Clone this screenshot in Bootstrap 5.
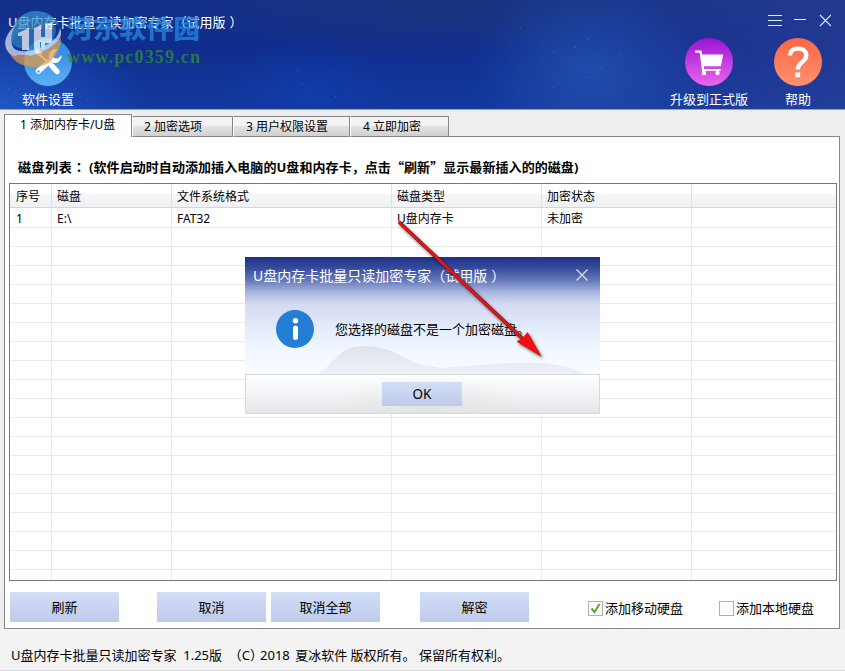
<!DOCTYPE html>
<html lang="zh-CN">
<head>
<meta charset="utf-8">
<meta name="viewport" content="width=device-width, initial-scale=1">
<title>U盘内存卡批量只读加密专家</title>
<link rel="stylesheet" href="https://cdn.jsdelivr.net/npm/bootstrap@5.3.0/dist/css/bootstrap.min.css">
<style>
body{font-family:"Noto Sans","Noto Sans CJK SC",sans-serif;font-size:13px;line-height:20px;color:#000;background:#f3f3f3;overflow:hidden}
.app{width:845px;height:671px;border-bottom:1px solid #d9d9dc}
.hero{height:110px;color:#fff;border-bottom:1px solid #8d9fd8;
 background:
 radial-gradient(ellipse 150px 90px at 0 100%,rgba(35,95,205,.8),transparent),
 radial-gradient(ellipse 90px 50px at 310px 90px,rgba(18,62,176,.6),transparent),
 radial-gradient(ellipse 120px 90px at 590px 70px,rgba(36,84,180,.75),transparent),
 radial-gradient(ellipse 260px 60px at 440px 0,rgba(28,54,122,.8),transparent),
 linear-gradient(90deg,rgba(50,68,150,0) 60%,rgba(50,68,150,.5) 100%),
 linear-gradient(#13308a,#102d8e 45%,#12399f)}
.hero-stars{left:0;top:0;pointer-events:none}
.titlebar{height:38px;padding:6px 14px 0 8px;line-height:32px}
.tool{width:96px;line-height:20px}
.tool svg{margin-bottom:3px}
.help-tool{margin-left:-7px;margin-right:-1px}
.paren{margin-left:4px}
.brand{left:4px;top:10px;pointer-events:none}
.work{height:519px;padding:4px 5px 0 4px;background:#eee}
.tabs{height:23px;position:relative;z-index:1;margin-bottom:-1px}
.tab-item{border:1px solid #868686;border-left-color:#fff;box-shadow:-1px 0 #868686;height:21px;font-size:12px;line-height:20px;padding-left:11px;background:linear-gradient(#f3f3f3 45%,#e2e2e2 50%,#d0d0d0)}
.tab-on{height:23px;background:#fff;border-color:#868686;border-bottom:0;padding-left:15px;width:128px;box-shadow:none}
.t2{width:101px}.t3,.t4{padding-left:12px}.t3{width:117px}.t4{width:99px}
.panel{height:493px;border:1px solid #868686;background:#fff}
.hint{height:46px;padding:20px 0 0 13px;font-size:13px;font-weight:700;letter-spacing:.07px}
.hint-lead{font-family:"Noto Sans CJK TC",sans-serif;letter-spacing:.6px;margin-right:3px}
.quote{font-family:"Noto Sans CJK SC",sans-serif}
.grid-box{height:398px;margin:0 2px 0 4px;border:1px solid #75777b;overflow:hidden}
.grid-table{width:826px;table-layout:fixed;font-size:12px;margin:0;border-collapse:separate;border-spacing:0}
.grid-table th{height:24px;padding:2px 5px 0;font-weight:400;line-height:20px;background:linear-gradient(#fff 42%,#f5f6f8 46%,#f0f1f3);border-right:1px solid #dfe1e4;border-bottom:1px solid #d3d5d8}
.grid-table td{height:19px;padding:0 5px;line-height:18px;border-right:1px solid #ebebeb;border-bottom:1px solid #ebebeb}
.grid-table tbody tr:first-child td{height:20px;padding-top:2px;line-height:17px}
.grid-table tr>:first-child{padding-left:6px}
.grid-table tr>:last-child{border-right:0}
.actions{padding:11px 25px 0 5px}
.act,.act:hover{height:30px;width:109px;padding:0;border:0;border-radius:0;font-size:13px;line-height:30px;color:#000;background:linear-gradient(#d3def6,#bdcaea)}
.gap-a{margin-left:38px}.gap-b{margin-left:5px}.gap-c{margin-left:40px}
.opt{margin-top:6px;line-height:20px;white-space:nowrap;gap:2px}
.opt-b{margin-left:36px}
.box{width:15px;height:15px;border:1px solid #aeb0b4;background:#fcfcfc}
.foot{height:41px;padding:16px 11px 0;font-size:13px;line-height:20px;white-space:pre}
.year{margin:0 2px 0 -3px}
.dlg{left:245px;top:257px;width:355px;height:157px;background:#fff}
.dlg-body{height:117px;background:linear-gradient(#1d3186 0,#344a9c 9%,#6578ba 20%,#a9b5dd 30%,#d2d9f1 40%,#e2e9fa 58%,#f1f8ff 80%,#f8fcff)}
.dlg-title{height:36px;padding:3px 12px 0 8px;font-size:14px;line-height:32px;color:#fff}
.dlg-x{margin-top:9px}
.dlg-msg{padding:17px 0 0 31px;gap:21px}
.hills{left:0;top:0}
.dlg-foot{height:40px;border:1px solid #d7dadd;background:radial-gradient(ellipse 100px 24px at 52% 75%,rgba(222,222,222,.6),transparent),linear-gradient(#fdfdfe,#f0f2f5 60%,#e3e6e8);padding-top:7px;padding-right:1px}
.dlg-ok,.dlg-ok:hover{width:80px;height:24px;font-size:13.500px;line-height:25px}
.arrow{left:0;top:0;pointer-events:none}
</style>
<script src="https://cdn.jsdelivr.net/npm/bootstrap@5.3.0/dist/js/bootstrap.bundle.min.js"></script>
</head>
<body>
<div class="app position-relative">
  <header class="hero position-relative">
    <svg class="hero-stars position-absolute" width="845" height="109" fill="#7ba6ff" fill-opacity=".35"><path d="M8 88h1v1h-1zM18 102h1v1h-1zM68 78h1v1h-1zM59 92h1v1h-1zM20 97h1v1h-1zM6 100h1v1h-1zM75 88h1v1h-1zM87 100h1v1h-1zM297 70h1v1h-1zM302 83h1v1h-1zM309 86h1v1h-1zM338 85h1v1h-1zM335 96h1v1h-1zM330 70h1v1h-1zM520 27h1v1h-1zM541 44h1v1h-1zM553 52h1v1h-1zM553 87h1v1h-1zM570 60h1v1h-1zM575 47h1v1h-1zM588 39h1v1h-1zM601 68h1v1h-1zM610 90h1v1h-1zM620 53h1v1h-1zM585 77h1v1h-1z"/></svg>
    <div class="titlebar d-flex justify-content-between position-relative">
      <span class="app-title">U盘内存卡批量只读加密专家（试用版<span class="paren">）</span></span>
      <svg width="64" height="14" viewBox="0 0 64 14" class="mt-2" fill="none" stroke="#e8ecf8" stroke-width="1"><path d="M1 1.500h14M1 6.500h14M1 11.500h14M27 5.500h12"/><path d="M53 1l11 11M64 1L53 12" stroke-width="1.100"/></svg>
    </div>
    <div class="d-flex position-relative">
      <div class="tool d-flex flex-column align-items-center">
        <svg width="48" height="48" viewBox="0 0 48 48"><defs><linearGradient id="gb" x2="0" y2="1"><stop stop-color="#2b83dc"/><stop offset="1" stop-color="#5bb0f5"/></linearGradient></defs><circle cx="24" cy="24" r="24" fill="url(#gb)"/><path d="M15 16L30 30" stroke="#fff" stroke-width="2.200"/><path d="M27.500 27.500l5.500 6" stroke="#fff" stroke-width="5.500" stroke-linecap="round"/><path d="M14.500 33L24 24.500" stroke="#fff" stroke-width="5.500" stroke-linecap="round"/><path d="M23 26l5-5" stroke="#fff" stroke-width="3.500"/><path d="M34 11.500l-4.500 4v4.500l4.500.500 3.500-3.500a7 7 0 0 1-9.500 7.500 7 7 0 0 1-2-9.500 7 7 0 0 1 8-3.500zM10 13.500l3-2.500 5.500 4-3.500 3.500z" fill="#fff"/><circle cx="14.500" cy="33.500" r="1.200" fill="#4ba1ec"/></svg>
        <span>软件设置</span>
      </div>
      <div class="tool d-flex flex-column align-items-center ms-auto">
        <svg width="48" height="48" viewBox="0 0 48 48"><defs><linearGradient id="gp" x2="0" y2="1"><stop stop-color="#9914d4"/><stop offset="1" stop-color="#ec66ed"/></linearGradient></defs><circle cx="24" cy="24" r="24" fill="url(#gp)"/><path d="M10 13.700h5.600l2.500 18.300h17.500" fill="none" stroke="#fff" stroke-width="2.200"/><path d="M16 16.500h22.300l-2.500 11.800H17.600z" fill="#fff"/><path d="M18 31v4M33 32v3" stroke="#fff" stroke-width="2"/><circle cx="19" cy="35" r="2.200" fill="#fff"/><circle cx="32.500" cy="35" r="2.200" fill="#fff"/></svg>
        <span>升级到正式版</span>
      </div>
      <div class="tool d-flex flex-column align-items-center help-tool">
        <svg width="48" height="48" viewBox="0 0 48 48"><defs><linearGradient id="go" x2="0" y2="1"><stop stop-color="#fb6644"/><stop offset="1" stop-color="#ff926f"/></linearGradient></defs><circle cx="24" cy="24" r="24" fill="url(#go)"/><path d="M16 17.500c.2-4.300 3-6.800 8-6.800 5 0 8.300 2.600 8.300 6.800 0 6.500-8.600 6.800-8.600 14" fill="none" stroke="#fff" stroke-width="4.300"/><path d="M21.200 34.500h5v4.700h-5z" fill="#fff"/></svg>
        <span>帮助</span>
      </div>
    </div>
    <svg class="brand position-absolute" width="202" height="60" viewBox="4 10 202 60">
      <g opacity=".72">
        <path d="M11 31C15 18 25 11 36 11c10 0 19 5 23 14-10-4-20-4-29 1-9 4-16 12-19 21-2-5-2-10 0-16z" fill="#3794cb"/>
        <path d="M13 45c0-10 8-18 18-22 9-3 18-2 24 3 2 6 0 12-5 16-10 8-25 10-37 3z" fill="#2d80bd"/>
        <path d="M8 50c12 8 36 6 53-12 0 5-1 9-3 13l-8 11c-8 5-16 6-24 4-9-2-15-8-18-16z" fill="#e39a42"/>
        <path d="M15 26C5 34 2 46 9 53c9 8 34 3 49-12 3-3 4-9 2-13-1 7-5 12-12 16-13 8-31 10-35 3-3-6-2-14 2-21z" fill="#dde4f1"/>
        <path d="M18 33l11-5v22h-7V36h-4zM34 28l7-3v12h4V24l7-2v21h-7v6h-4v-7h-1v8h-6z" fill="#fff"/>
        <path d="M16 55h13v9h-6zM46 51l11-3-2 8-8 5z" fill="#e7a04b"/>
      </g>
      <text x="66" y="38" textLength="134" lengthAdjust="spacingAndGlyphs" font-family="Noto Sans CJK SC,sans-serif" font-weight="900" font-size="25" fill="#2489df" fill-opacity=".75">河东软件园</text>
      <text x="67" y="63" textLength="133" lengthAdjust="spacing" font-family="Liberation Serif,serif" font-weight="700" font-size="18" fill="#2c8a3c" fill-opacity=".8">www.pc0359.cn</text>
    </svg>
  </header>

  <main class="work">
    <div class="tabs d-flex align-items-end">
      <div class="tab-item tab-on">1 添加内存卡/U盘</div>
      <div class="tab-item t2">2 加密选项</div>
      <div class="tab-item t3">3 用户权限设置</div>
      <div class="tab-item t4">4 立即加密</div>
    </div>
    <section class="panel">
      <div class="hint text-nowrap"><span class="hint-lead" lang="zh-TW">磁盘列表：</span>(软件启动时自动添加插入电脑的U盘和内存卡，点击<span class="quote">“</span>刷新<span class="quote">”</span>显示最新插入的的磁盘)</div>
      <div class="grid-box">
        <table class="grid-table">
          <colgroup><col style="width:42px"><col style="width:120px"><col style="width:220px"><col style="width:150px"><col style="width:150px"><col></colgroup>
          <thead><tr><th>序号</th><th>磁盘</th><th>文件系统格式</th><th>磁盘类型</th><th>加密状态</th><th></th></tr></thead>
          <tbody id="rows"><tr><td>1</td><td>E:\</td><td>FAT32</td><td>U盘内存卡</td><td>未加密</td><td></td></tr></tbody>
        </table>
      </div>
      <div class="actions d-flex align-items-start">
        <button class="btn act">刷新</button>
        <button class="btn act gap-a">取消</button>
        <button class="btn act gap-b">取消全部</button>
        <button class="btn act gap-c">解密</button>
        <label class="d-flex align-items-center ms-auto opt"><span class="box"><svg width="13" height="13" class="d-block"><path d="M2.500 6.500l3 3.500 5-8" fill="none" stroke="#5fa52b" stroke-width="2"/></svg></span>添加移动硬盘</label>
        <label class="d-flex align-items-center opt opt-b"><span class="box"></span>添加本地硬盘</label>
      </div>
    </section>
  </main>
  <footer class="foot">U盘内存卡批量只读加密专家  1.25版  （C）<span class="year">2018</span> 夏冰软件 版权所有。 保留所有权利。</footer>

  <div class="dlg position-absolute">
    <div class="dlg-body position-relative">
      <svg class="hills position-absolute" width="355" height="117"><defs><linearGradient id="hg" x2="0" y2="1"><stop stop-color="#dfe2ea"/><stop offset="1" stop-color="#edf1f6"/></linearGradient></defs><path d="M72 117c16-7 20-28 46-28 25 0 39 11 55 18l22 4c38-3 60-5 80-5 30-1 50 3 65 11z" fill="url(#hg)"/></svg>
      <div class="dlg-title d-flex justify-content-between position-relative"><span>U盘内存卡批量只读加密专家（试用版<span class="paren">）</span></span>
        <svg width="12" height="12" class="dlg-x"><path d="M.5.500l11 11M11.500.500l-11 11" stroke="#dce3f5" stroke-width="1.200"/></svg></div>
      <div class="dlg-msg d-flex align-items-center position-relative">
        <svg width="38" height="38" viewBox="0 0 38 38"><circle cx="19" cy="19" r="19" fill="#247ed3"/><circle cx="19.500" cy="10.700" r="2.700" fill="#fff"/><path d="M19.500 18v9.500" stroke="#fff" stroke-width="5" stroke-linecap="round"/></svg>
        <span>您选择的磁盘不是一个加密磁盘。</span>
      </div>
    </div>
    <div class="dlg-foot text-center"><button class="btn act dlg-ok d-block mx-auto">OK</button></div>
  </div>

  <svg class="arrow position-absolute" width="845" height="671"><defs><filter id="sh" x="-20%" y="-20%" width="140%" height="140%"><feDropShadow dx="1.500" dy="2" stdDeviation="1.500" flood-opacity=".6"/></filter></defs><g filter="url(#sh)"><path d="M399 222L524 340" stroke="#8e1414" stroke-width="3.600"/><path d="M399 222L524 340" stroke="#e3141a" stroke-width="2.200"/><path d="M541 356l-24-14.500 5.500-3 5-6z" fill="#fb0f0c" stroke="#a01515" stroke-width=".6"/></g></svg>
</div>
<script>
// Fill the list with empty rows down to the bottom edge.
const body = document.getElementById('rows');
for (let i = 0; i < 19; i++) {
  const row = body.insertRow();
  for (let c = 0; c < 6; c++) row.insertCell();
}
</script>
</body>
</html>
